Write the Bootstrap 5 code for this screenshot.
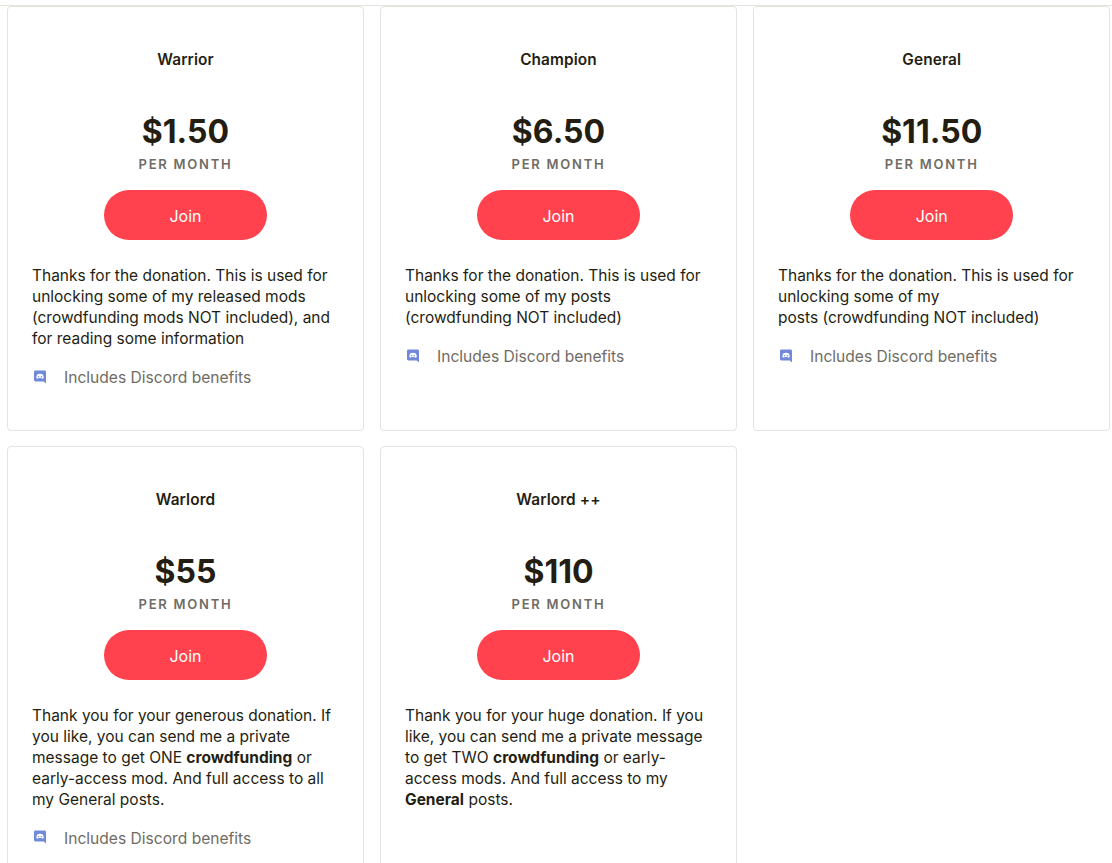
<!DOCTYPE html>
<html lang="en">
<head>
<meta charset="utf-8">
<title>Tiers</title>
<link href="https://cdn.jsdelivr.net/npm/bootstrap@5.3.0/dist/css/bootstrap.min.css" rel="stylesheet">
<style>
html,body{height:863px;overflow:hidden;background:#fff}
body{font-family:Inter,"Liberation Sans",sans-serif;color:#241e12}
.tier-page{border-top:1px solid #e5e3dd;margin-top:5px;padding:0 0 0 7px;display:grid;grid-template-columns:357px 357px 357.4px;column-gap:16px;row-gap:14.6px;grid-auto-rows:425px}
.tier-card{border:1px solid #e5e3dd;border-radius:4px;background:#fff;padding:0 24px;display:flex;flex-direction:column}
.tier-name{font-size:15.4px;font-weight:600;line-height:20px;margin:43px 0 0;text-align:center;letter-spacing:.1px}
.tier-price{font-size:32px;font-weight:700;line-height:40px;margin:42.400px 0 0;text-align:center}
.tier-per{font-size:13px;font-weight:600;letter-spacing:1.75px;color:#706c64;line-height:16px;margin:4px 0 0;text-align:center}
.tier-join{display:block;width:163px;height:50px;margin:18px auto 0;border:0;border-radius:25px;background:#ff424d;color:#fff;font-size:16px;font-weight:400;line-height:52px;padding:0;text-align:center}
.tier-text{font-size:15.5px;line-height:21px;margin:25px 0 0}
.tier-text strong{font-weight:700}
.tier-perk{display:flex;align-items:center;margin-top:18px;font-size:15.6px;line-height:21px;color:#706c64}
.tier-perk svg{width:12px;height:14px;margin:0 18px 2px 2px;flex:none}
</style>
</head>
<body>
<main class="tier-page">
<section class="tier-card">
<h2 class="tier-name">Warrior</h2><div class="tier-price">$1.50</div><div class="tier-per">PER MONTH</div>
<a class="tier-join text-decoration-none" href="#">Join</a>
<p class="tier-text">Thanks for the donation. This is used for unlocking some of my released mods (crowdfunding mods NOT included), and for reading some information</p>
<div class="tier-perk"><svg viewBox="0 0 13 14"><path fill="#7289da" d="M1.5 0h10A1.5 1.5 0 0 1 13 1.5V14l-2.5-2.2H1.5A1.5 1.5 0 0 1 0 10.3V1.5A1.5 1.5 0 0 1 1.5 0z"/><path fill="#fff" d="M3.4 4.2c2-.9 4.2-.9 6.2 0 .7 1.3 1 2.5 1 3.8-.7.5-1.3.7-2 .8l-.5-.7H5l-.5.7c-.7-.1-1.400-.3-2-.8 0-1.300.3-2.500.9-3.800z"/><circle cx="5" cy="6.600" r=".8" fill="#7289da"/><circle cx="8" cy="6.600" r=".8" fill="#7289da"/></svg>Includes Discord benefits</div>
</section>
<section class="tier-card">
<h2 class="tier-name">Champion</h2><div class="tier-price">$6.50</div><div class="tier-per">PER MONTH</div>
<a class="tier-join text-decoration-none" href="#">Join</a>
<p class="tier-text">Thanks for the donation. This is used for unlocking some of my posts<br>(crowdfunding NOT included)</p>
<div class="tier-perk"><svg viewBox="0 0 13 14"><path fill="#7289da" d="M1.5 0h10A1.5 1.5 0 0 1 13 1.5V14l-2.5-2.2H1.5A1.5 1.5 0 0 1 0 10.3V1.5A1.5 1.5 0 0 1 1.5 0z"/><path fill="#fff" d="M3.4 4.2c2-.9 4.2-.9 6.2 0 .7 1.3 1 2.5 1 3.8-.7.5-1.3.7-2 .8l-.5-.7H5l-.5.7c-.7-.1-1.400-.3-2-.8 0-1.300.3-2.500.9-3.800z"/><circle cx="5" cy="6.600" r=".8" fill="#7289da"/><circle cx="8" cy="6.600" r=".8" fill="#7289da"/></svg>Includes Discord benefits</div>
</section>
<section class="tier-card">
<h2 class="tier-name">General</h2><div class="tier-price">$11.50</div><div class="tier-per">PER MONTH</div>
<a class="tier-join text-decoration-none" href="#">Join</a>
<p class="tier-text">Thanks for the donation. This is used for unlocking some of my<br>posts (crowdfunding NOT included)</p>
<div class="tier-perk"><svg viewBox="0 0 13 14"><path fill="#7289da" d="M1.5 0h10A1.5 1.5 0 0 1 13 1.5V14l-2.5-2.2H1.5A1.5 1.5 0 0 1 0 10.3V1.5A1.5 1.5 0 0 1 1.5 0z"/><path fill="#fff" d="M3.4 4.2c2-.9 4.2-.9 6.2 0 .7 1.3 1 2.5 1 3.8-.7.5-1.3.7-2 .8l-.5-.7H5l-.5.7c-.7-.1-1.400-.3-2-.8 0-1.300.3-2.500.9-3.800z"/><circle cx="5" cy="6.600" r=".8" fill="#7289da"/><circle cx="8" cy="6.600" r=".8" fill="#7289da"/></svg>Includes Discord benefits</div>
</section>
<section class="tier-card">
<h2 class="tier-name">Warlord</h2><div class="tier-price">$55</div><div class="tier-per">PER MONTH</div>
<a class="tier-join text-decoration-none" href="#">Join</a>
<p class="tier-text">Thank you for your generous donation. If you like, you can send me a private message to get ONE <strong>crowdfunding</strong> or early-access mod. And full access to all my General posts.</p>
<div class="tier-perk"><svg viewBox="0 0 13 14"><path fill="#7289da" d="M1.5 0h10A1.5 1.5 0 0 1 13 1.5V14l-2.5-2.2H1.5A1.5 1.5 0 0 1 0 10.3V1.5A1.5 1.5 0 0 1 1.5 0z"/><path fill="#fff" d="M3.4 4.2c2-.9 4.2-.9 6.2 0 .7 1.3 1 2.5 1 3.8-.7.5-1.3.7-2 .8l-.5-.7H5l-.5.7c-.7-.1-1.400-.3-2-.8 0-1.300.3-2.500.9-3.800z"/><circle cx="5" cy="6.600" r=".8" fill="#7289da"/><circle cx="8" cy="6.600" r=".8" fill="#7289da"/></svg>Includes Discord benefits</div>
</section>
<section class="tier-card">
<h2 class="tier-name">Warlord ++</h2><div class="tier-price">$110</div><div class="tier-per">PER MONTH</div>
<a class="tier-join text-decoration-none" href="#">Join</a>
<p class="tier-text">Thank you for your huge donation. If you like, you can send me a private message to get TWO <strong>crowdfunding</strong> or early-access mods. And full access to my <strong>General</strong> posts.</p>
</section>
</main>
<script src="https://cdn.jsdelivr.net/npm/bootstrap@5.3.0/dist/js/bootstrap.bundle.min.js"></script>
</body>
</html>
